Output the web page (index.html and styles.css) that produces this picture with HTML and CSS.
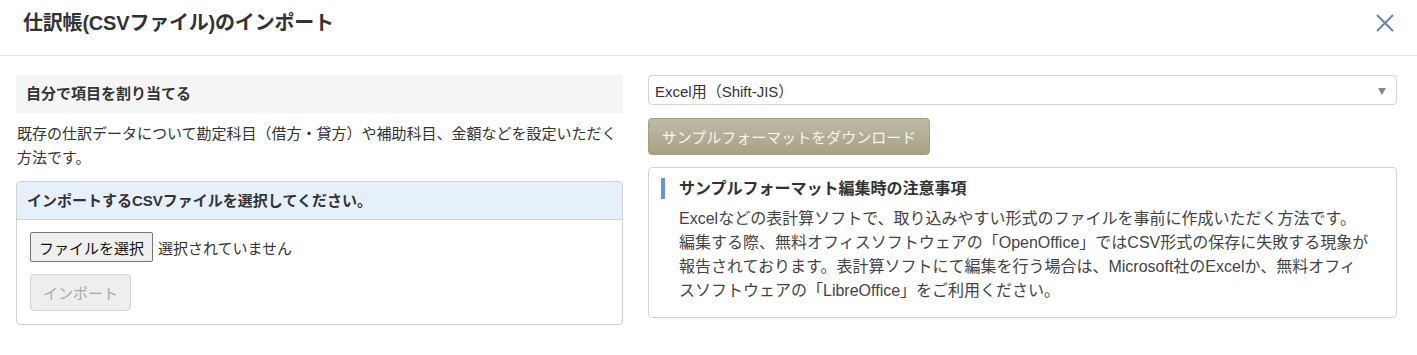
FILE: index.html
```html
<!DOCTYPE html>
<html lang="ja">
<head>
  <meta charset="UTF-8" />
  <title>仕訳帳(CSVファイル)のインポート</title>
  <link rel="stylesheet" href="styles.css">
</head>
<body>

  <!-- MODAL HEADER -->
  <header class="modal-header">
    <h1>仕訳帳(CSVファイル)のインポート</h1>
    <button class="close-btn" aria-label="閉じる">
      <svg width="20" height="20" viewBox="0 0 20 20">
        <path d="M2 2 L18 18 M18 2 L2 18" stroke="#5d80b6" stroke-width="1.8" fill="none"/>
      </svg>
    </button>
  </header>

  <!-- MODAL BODY -->
  <div class="modal-body">
    <div class="col-left">
      <h2 class="section-title">自分で項目を割り当てる</h2>
      <p class="desc">既存の仕訳データについて勘定科目（借方・貸方）や補助科目、金額などを設定いただく<br>方法です。</p>

      <div class="panel">
        <div class="panel-heading">インポートするCSVファイルを選択してください。</div>
        <div class="panel-body">
          <div class="file-row">
            <button class="file-btn">ファイルを選択</button>
            <span class="file-name">選択されていません</span>
          </div>
          <button class="import-btn" disabled>インポート</button>
        </div>
      </div>
    </div>

    <div class="col-right">
      <div class="select-box">
        <span>Excel用（Shift-JIS）</span>
        <span class="caret"></span>
      </div>
      <button class="download-btn">サンプルフォーマットをダウンロード</button>

      <div class="notice">
        <h3 class="notice-title">サンプルフォーマット編集時の注意事項</h3>
        <p class="notice-text">Excelなどの表計算ソフトで、取り込みやすい形式のファイルを事前に作成いただく方法です。<br>編集する際、無料オフィスソフトウェアの「OpenOffice」ではCSV形式の保存に失敗する現象が<br>報告されております。表計算ソフトにて編集を行う場合は、Microsoft社のExcelか、無料オフィ<br>スソフトウェアの「LibreOffice」をご利用ください。</p>
      </div>
    </div>
  </div>

</body>
</html>
```

FILE: styles.css
```css
* {
  box-sizing: border-box;
}

body {
  margin: 0;
  padding: 0;
  background: #fff;
  color: #333;
  font-family: "Liberation Sans", "Noto Sans CJK JP", sans-serif;
  font-size: 14px;
}

/* ===== HEADER ===== */
.modal-header {
  height: 56px;
  padding: 0 20px 0 23px;
  display: flex;
  justify-content: space-between;
  align-items: center;
  border-bottom: 1px solid #e5e5e5;
}

.modal-header h1 {
  margin: 0 0 12px;
  font-size: 20px;
  font-weight: bold;
  color: #333;
  letter-spacing: -0.2px;
}

.close-btn {
  background: none;
  border: none;
  padding: 0;
  margin: 0 2px 10px 0;
  cursor: pointer;
  display: flex;
}

/* ===== BODY ===== */
.modal-body {
  display: grid;
  grid-template-columns: 607px 1fr;
  gap: 25px;
  padding: 19px 20px 0 16px;
}

.section-title {
  margin: 0;
  height: 38px;
  padding: 0 10px;
  background: #f5f5f5;
  font-size: 15px;
  font-weight: bold;
  line-height: 38px;
  color: #333;
}

.desc {
  margin: 9px 0 11px;
  padding-left: 1px;
  font-size: 15px;
  line-height: 24px;
  color: #333;
}

.panel {
  border: 1px solid #d0d0d0;
  border-radius: 4px;
  overflow: hidden;
}

.panel-heading {
  height: 38px;
  padding: 0 10px;
  background: #e6f0fb;
  border-bottom: 1px solid #ccd3dc;
  font-size: 15px;
  font-weight: bold;
  line-height: 37px;
}

.panel-body {
  padding: 12px 13px 13px;
}

.file-row {
  display: flex;
  align-items: center;
  gap: 5px;
}

.file-btn {
  height: 30px;
  padding: 0 8px;
  font-family: inherit;
  font-size: 15px;
  color: #111;
  background: #efefef;
  border: 1px solid #767676;
  border-radius: 2px;
}

.file-name {
  font-size: 15px;
  color: #333;
}

.import-btn {
  margin-top: 12px;
  width: 101px;
  height: 37px;
  font-family: inherit;
  font-size: 15px;
  color: #aaa;
  background: #eee;
  border: 1px solid #d5d5d5;
  border-radius: 4px;
}

/* ===== RIGHT COLUMN ===== */
.select-box {
  height: 30px;
  padding: 0 10px 0 6px;
  display: flex;
  justify-content: space-between;
  align-items: center;
  border: 1px solid #d4d4d4;
  border-radius: 4px;
  font-size: 15px;
  color: #333;
}

.caret {
  width: 0;
  height: 0;
  border-left: 4px solid transparent;
  border-right: 4px solid transparent;
  border-top: 7px solid #888;
  margin-top: 2px;
}

.download-btn {
  margin-top: 13px;
  width: 282px;
  height: 37px;
  padding: 0;
  font-family: inherit;
  font-size: 15px;
  color: #f6f5f0;
  background: linear-gradient(#bebba6, #a7a185);
  border: 1px solid #a39d82;
  border-radius: 4px;
  cursor: pointer;
}

.notice {
  margin-top: 12px;
  padding: 10px 20px 14px 12px;
  border: 1px solid #d4d4d4;
  border-radius: 4px;
}

.notice-title {
  margin: 0;
  padding-left: 14px;
  border-left: 4px solid #6b93d6;
  font-size: 16px;
  font-weight: bold;
  line-height: 21px;
  color: #333;
}

.notice-text {
  margin: 8px 0 0;
  padding-left: 18px;
  font-size: 16px;
  line-height: 24px;
  color: #444;
}
```
